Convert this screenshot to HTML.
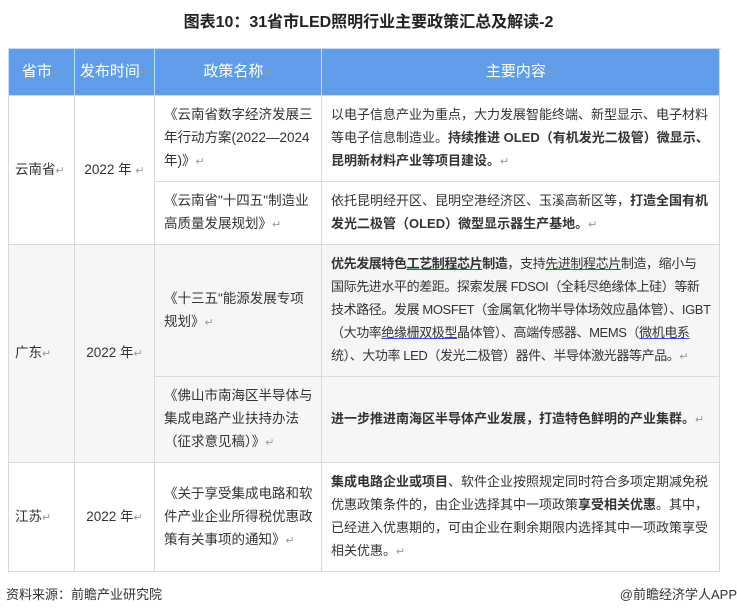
<!DOCTYPE html>
<html><head><meta charset="utf-8"><style>
body{margin:0;width:737px;height:615px;background:#fff;font-family:"Liberation Sans","Noto Sans CJK SC",sans-serif;color:#333;position:relative;overflow:hidden}
.t{position:absolute;top:8px;left:0;width:737px;text-align:center;font-weight:bold;font-size:16px;color:#222}
.c{position:absolute;box-sizing:border-box;border-right:1px solid #d9d9d9;border-bottom:1px solid #d9d9d9;display:flex;align-items:center;font-size:13.5px;line-height:23px}
.h{background:#5f9de8;color:#fff;justify-content:center;font-size:15px;border-color:#cfd8e6}
.g{background:#f6f6f6}
.p{padding:0 0 0 9px;white-space:nowrap;overflow:visible}
.q{font-size:13px}
.m{color:#999;font-size:11px}
b{font-weight:bold;color:#333}
u{text-decoration:underline;text-decoration-color:#3355cc}
.f{position:absolute;top:584px;font-size:13px;color:#333}
.n{letter-spacing:-0.4px}
</style></head><body>
<div class="t">图表10：31省市LED照明行业主要政策汇总及解读-2</div>
<div style="position:absolute;left:8px;top:48px;width:712px;height:524px;border-left:1px solid #d9d9d9;border-top:1px solid #d9d9d9"></div>
<div class="c h" style="left:9px;top:49px;width:66px;height:47px"><span>省市<span class="m">↵</span></span></div>
<div class="c h" style="left:75px;top:49px;width:80px;height:47px"><span>发布时间<span class="m">↵</span></span></div>
<div class="c h" style="left:155px;top:49px;width:167px;height:47px"><span>政策名称<span class="m">↵</span></span></div>
<div class="c h" style="left:322px;top:49px;width:398px;height:47px"><span>主要内容<span class="m">↵</span></span></div>

<div class="c" style="left:9px;top:96px;width:66px;height:149px;padding-left:6px"><span>云南省<span class="m">↵</span></span></div>
<div class="c" style="left:75px;top:96px;width:80px;height:149px;justify-content:center"><span>2022 年 <span class="m">↵</span></span></div>
<div class="c p" style="left:155px;top:96px;width:167px;height:86px"><span>《云南省数字经济发展三<br>年行动方案(2022—2024<br>年)》<span class="m">↵</span></span></div>
<div class="c p q" style="left:322px;top:96px;width:398px;height:86px"><span>以电子信息产业为重点，大力发展智能终端、新型显示、电子材料<br>等电子信息制造业。<b>持续推进 OLED（有机发光二极管）微显示、</b><br><b>昆明新材料产业等项目建设。</b><span class="m">↵</span></span></div>
<div class="c p" style="left:155px;top:182px;width:167px;height:63px"><span>《云南省"十四五"制造业<br>高质量发展规划》<span class="m">↵</span></span></div>
<div class="c p q" style="left:322px;top:182px;width:398px;height:63px"><span>依托昆明经开区、昆明空港经济区、玉溪高新区等，<b>打造全国有机</b><br><b>发光二极管（OLED）微型显示器生产基地。</b><span class="m">↵</span></span></div>

<div class="c g" style="left:9px;top:245px;width:66px;height:218px;padding-left:6px"><span>广东<span class="m">↵</span></span></div>
<div class="c g" style="left:75px;top:245px;width:80px;height:218px;justify-content:center"><span>2022 年<span class="m">↵</span></span></div>
<div class="c p g" style="left:155px;top:245px;width:167px;height:132px"><span>《十三五"能源发展专项<br>规划》<span class="m">↵</span></span></div>
<div class="c p g n q" style="left:322px;top:245px;width:398px;height:132px"><span><b>优先发展特色<u>工艺制程芯片</u>制造</b>，支持<u>先进制程芯片</u>制造，缩小与<br>国际先进水平的差距。探索发展 FDSOI（全耗尽绝缘体上硅）等新<br>技术路径。发展 MOSFET（金属氧化物半导体场效应晶体管）、IGBT<br>（大功率<u>绝缘栅双极型</u>晶体管）、高端传感器、MEMS（<u>微机电系</u><br>统）、大功率 LED（发光二极管）器件、半导体激光器等产品。<span class="m">↵</span></span></div>
<div class="c p g" style="left:155px;top:377px;width:167px;height:86px"><span>《佛山市南海区半导体与<br>集成电路产业扶持办法<br>（征求意见稿）》<span class="m">↵</span></span></div>
<div class="c p g q" style="left:322px;top:377px;width:398px;height:86px"><span><b>进一步推进南海区半导体产业发展，打造特色鲜明的产业集群。</b><span class="m">↵</span></span></div>

<div class="c" style="left:9px;top:463px;width:66px;height:109px;padding-left:6px"><span>江苏<span class="m">↵</span></span></div>
<div class="c" style="left:75px;top:463px;width:80px;height:109px;justify-content:center"><span>2022 年<span class="m">↵</span></span></div>
<div class="c p" style="left:155px;top:463px;width:167px;height:109px"><span>《关于享受集成电路和软<br>件产业企业所得税优惠政<br>策有关事项的通知》<span class="m">↵</span></span></div>
<div class="c p q" style="left:322px;top:463px;width:398px;height:109px"><span><b>集成电路企业或项目</b>、软件企业按照规定同时符合多项定期减免税<br>优惠政策条件的，由企业选择其中一项政策<b>享受相关优惠</b>。其中，<br>已经进入优惠期的，可由企业在剩余期限内选择其中一项政策享受<br>相关优惠。<span class="m">↵</span></span></div>

<div class="f" style="left:6px">资料来源：前瞻产业研究院</div>
<div class="f" style="right:0">@前瞻经济学人APP</div>
</body></html>
